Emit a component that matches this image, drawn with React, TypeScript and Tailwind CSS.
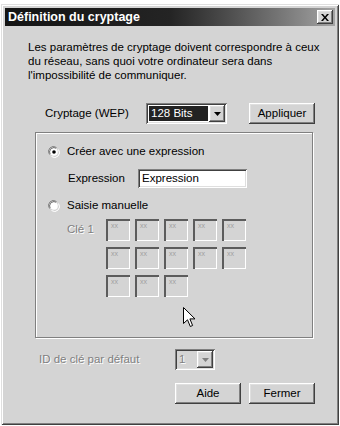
import React from "react";

const raised =
  "bg-[#d4d4d4] shadow-[inset_-1px_-1px_#404040,inset_1px_1px_#ffffff,inset_-2px_-2px_#808080,inset_2px_2px_#dfdfdf]";
const sunken =
  "shadow-[inset_1px_1px_#808080,inset_-1px_-1px_#ffffff,inset_2px_2px_#404040,inset_-2px_-2px_#dfdfdf]";
const disabledText = "text-[#808080] [text-shadow:1px_1px_0_#ffffff]";

function Arrow({ color = "#000" }: { color?: string }) {
  return (
    <svg width="7" height="4" viewBox="0 0 7 4">
      <path d="M0 0h7L3.5 4z" fill={color} />
    </svg>
  );
}

function DropButton({ disabled }: { disabled?: boolean }) {
  return (
    <div className={`${raised} w-[16px] h-full flex items-center justify-center`}>
      <Arrow color={disabled ? "#808080" : "#000"} />
    </div>
  );
}

function Radio({ checked }: { checked?: boolean }) {
  return (
    <svg width="12" height="12" viewBox="0 0 12 12" className="shrink-0">
      <path d="M1.5 8.5A5 5 0 0 1 8.5 1.5" stroke="#808080" fill="none" />
      <path d="M2.5 8A4 4 0 0 1 8 2.5" stroke="#404040" fill="none" />
      <path d="M3.5 10.5A5 5 0 0 0 10.5 3.5" stroke="#ffffff" fill="none" />
      <circle cx="6" cy="6" r="3.8" fill="#ffffff" />
      {checked && <circle cx="6" cy="6" r="1.8" fill="#000" />}
    </svg>
  );
}

function Button({ label }: { label: string }) {
  return (
    <div className={`${raised} w-[66px] h-[21px] flex items-center justify-center`}>
      {label}
    </div>
  );
}

function KeyBox() {
  return (
    <div className="w-[24px] h-[22px] bg-[#d4d4d4] shadow-[inset_1px_1px_#5c5c5c,inset_2px_2px_#5c5c5c,inset_-1px_-1px_#ffffff] pl-[5px] pt-[2px] text-[7px] leading-[9px] text-[#a0a0a0]">
      xx
    </div>
  );
}

export default function App() {
  return (
    <div className="w-[340px] h-[426px] bg-white pt-[4px] pl-[1px] font-['Liberation_Sans',Arial,sans-serif] text-[11.5px] text-black">
      <div className="w-[338px] h-[421px] bg-[#d4d4d4] shadow-[inset_1px_1px_#dfdfdf,inset_-1px_-1px_#404040,inset_2px_2px_#ffffff,inset_-2px_-2px_#808080] p-[4px]">
        {/* title bar */}
        <div className="h-[18px] bg-gradient-to-r from-[#141414] via-[#242424] to-[#a4a4a4] flex items-center justify-between pl-[3px] pr-[2px]">
          <span className="text-white font-bold text-[12.5px]">Définition du cryptage</span>
          <div className={`${raised} w-[16px] h-[14px] flex items-center justify-center`}>
            <svg width="8" height="7" viewBox="0 0 8 7">
              <path d="M0 0h2l2 2.5L6 0h2L5 3.5 8 7H6L4 4.5 2 7H0l3-3.5z" fill="#000" />
            </svg>
          </div>
        </div>

        <p className="ml-[23px] mt-[14px] leading-[14px]">
          Les paramètres de cryptage doivent correspondre à ceux
          <br />
          du réseau, sans quoi votre ordinateur sera dans
          <br />
          l'impossibilité de communiquer.
        </p>

        <div className="mt-[21px] h-[21px] flex items-center">
          <span className="ml-[40px] w-[101px]">Cryptage (WEP)</span>
          <div className={`w-[81px] h-[21px] bg-white ${sunken} p-[2px] flex`}>
            <div className="flex-1 bg-[#222222] text-white flex items-center pl-[2px] m-[1px]">128 Bits</div>
            <DropButton />
          </div>
          <div className="ml-[22px]">
            <Button label="Appliquer" />
          </div>
        </div>

        {/* group box */}
        <div className="relative mt-[8px] ml-[30px] w-[278px] h-[206px] border border-[#808080] shadow-[1px_1px_0_#ffffff,inset_1px_1px_0_#ffffff]">
          <div className="mt-[12px] ml-[12px] h-[14px] flex items-center gap-[7px]">
            <Radio checked />
            <span>Créer avec une expression</span>
          </div>
          <div className="mt-[10px] flex items-center h-[19px]">
            <span className="ml-[32px] w-[70px]">Expression</span>
            <div className={`w-[109px] h-[19px] bg-white ${sunken} flex items-center pl-[4px]`}>Expression</div>
          </div>
          <div className="mt-[11px] ml-[12px] h-[14px] flex items-center gap-[7px]">
            <Radio />
            <span>Saisie manuelle</span>
          </div>
          <div className="mt-[6px] flex">
            <span className={`ml-[31px] w-[39px] h-[22px] flex items-center ${disabledText}`}>Clé 1</span>
            <div className="grid grid-cols-5 gap-x-[5px] gap-y-[6px]">
              {Array.from({ length: 13 }).map((_, i) => (
                <KeyBox key={i} />
              ))}
            </div>
          </div>
          {/* mouse pointer */}
          <svg width="13" height="21" viewBox="0 0 13 21" className="absolute left-[147px] top-[174px]">
            <path
              d="M0.5 0.5V16.5L4.5 12.8L7.3 19.5L9.6 18.5L6.9 11.9H12Z"
              fill="#ffffff"
              stroke="#000000"
              strokeLinejoin="round"
            />
          </svg>
        </div>

        <div className="mt-[11px] h-[21px] flex items-center">
          <span className={`ml-[34px] w-[136px] ${disabledText}`}>ID de clé par défaut</span>
          <div className={`w-[40px] h-[21px] bg-[#d4d4d4] ${sunken} p-[2px] flex`}>
            <div className={`flex-1 flex items-center pl-[2px] ${disabledText}`}>1</div>
            <DropButton disabled />
          </div>
        </div>

        <div className="mt-[13px] ml-[170px] flex gap-[8px]">
          <Button label="Aide" />
          <Button label="Fermer" />
        </div>
      </div>
    </div>
  );
}
